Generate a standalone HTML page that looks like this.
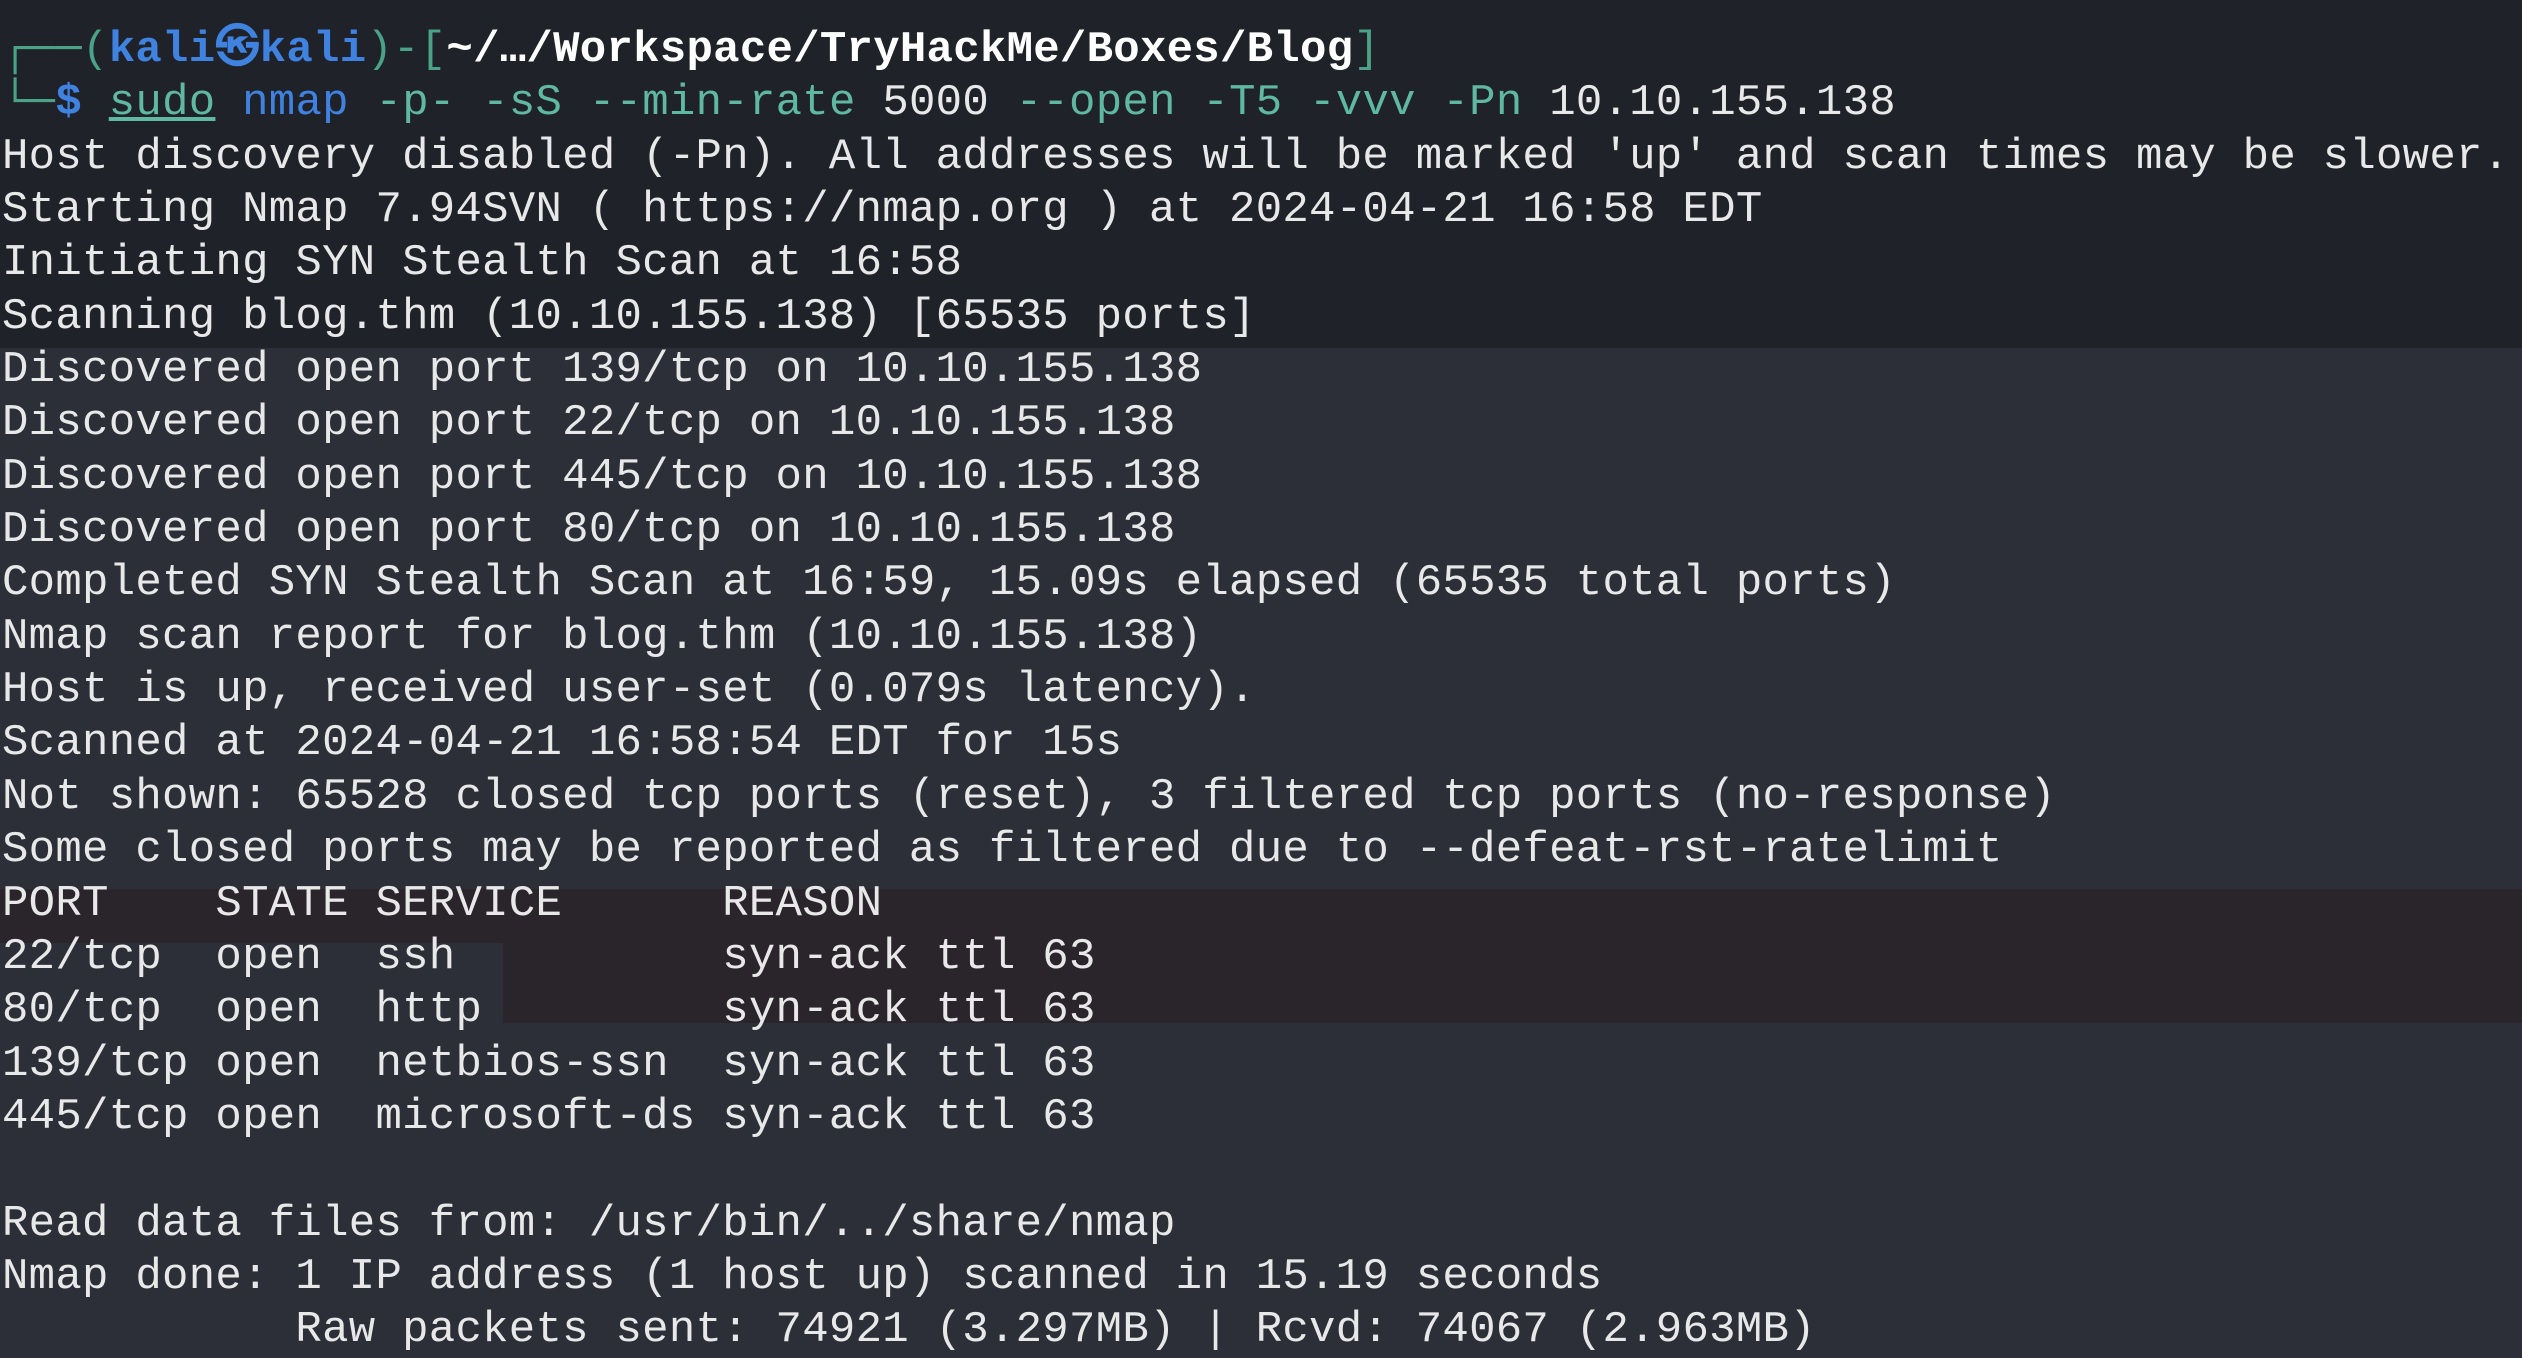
<!DOCTYPE html>
<html><head><meta charset="utf-8"><style>
html,body{margin:0;padding:0;width:2522px;height:1354px;overflow:hidden;background:#2c2f37;}
.bg1{position:absolute;left:0;top:0;width:2522px;height:348px;background:#202229;}
.bg2{position:absolute;left:0;top:889px;width:2522px;height:134px;background:#2a242b;}
.bg3{position:absolute;left:0;top:943px;width:503px;height:80px;background:#2c2f37;}
pre{position:absolute;left:2px;top:24px;margin:0;font-family:"Liberation Mono","DejaVu Sans Mono",monospace;font-size:44px;letter-spacing:0.27px;line-height:53.35px;color:#e8e8e8;}
.g{color:#4aa386}.b{color:#3f82e0;font-weight:bold}.w{color:#fff;font-weight:bold}.t{color:#5fb8a2}.n{color:#3f82e0}
.u{text-decoration:underline}
</style></head><body>
<div class="bg1"></div><div class="bg2"></div><div class="bg3"></div>
<pre><span class="g">┌──(</span><span class="b">kali㉿kali</span><span class="g">)-[</span><span class="w">~/…/Workspace/TryHackMe/Boxes/Blog</span><span class="g">]</span>
<span class="g">└─</span><span class="b">$</span> <span class="t u">sudo</span> <span class="n">nmap</span> <span class="t">-p- -sS --min-rate</span> 5000 <span class="t">--open -T5 -vvv -Pn</span> 10.10.155.138
Host discovery disabled (-Pn). All addresses will be marked 'up' and scan times may be slower.
Starting Nmap 7.94SVN ( https://nmap.org ) at 2024-04-21 16:58 EDT
Initiating SYN Stealth Scan at 16:58
Scanning blog.thm (10.10.155.138) [65535 ports]
Discovered open port 139/tcp on 10.10.155.138
Discovered open port 22/tcp on 10.10.155.138
Discovered open port 445/tcp on 10.10.155.138
Discovered open port 80/tcp on 10.10.155.138
Completed SYN Stealth Scan at 16:59, 15.09s elapsed (65535 total ports)
Nmap scan report for blog.thm (10.10.155.138)
Host is up, received user-set (0.079s latency).
Scanned at 2024-04-21 16:58:54 EDT for 15s
Not shown: 65528 closed tcp ports (reset), 3 filtered tcp ports (no-response)
Some closed ports may be reported as filtered due to --defeat-rst-ratelimit
PORT    STATE SERVICE      REASON
22/tcp  open  ssh          syn-ack ttl 63
80/tcp  open  http         syn-ack ttl 63
139/tcp open  netbios-ssn  syn-ack ttl 63
445/tcp open  microsoft-ds syn-ack ttl 63

Read data files from: /usr/bin/../share/nmap
Nmap done: 1 IP address (1 host up) scanned in 15.19 seconds
           Raw packets sent: 74921 (3.297MB) | Rcvd: 74067 (2.963MB)</pre>
</body></html>
